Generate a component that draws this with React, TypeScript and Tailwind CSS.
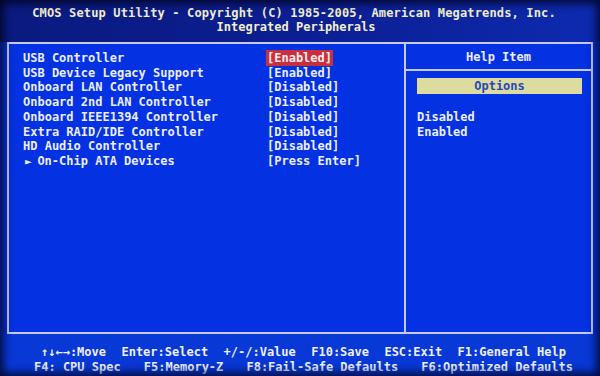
const ITEMS: { label: string; value: string; sub?: boolean; active?: boolean }[] = [
  { label: "USB Controller", value: "[Enabled]", active: true },
  { label: "USB Device Legacy Support", value: "[Enabled]" },
  { label: "Onboard LAN Controller", value: "[Disabled]" },
  { label: "Onboard 2nd LAN Controller", value: "[Disabled]" },
  { label: "Onboard IEEE1394 Controller", value: "[Disabled]" },
  { label: "Extra RAID/IDE Controller", value: "[Disabled]" },
  { label: "HD Audio Controller", value: "[Disabled]" },
  { label: "On-Chip ATA Devices", value: "[Press Enter]", sub: true },
];

const KEYS_TOP = [
  "↑↓←→:Move",
  "Enter:Select",
  "+/-/:Value",
  "F10:Save",
  "ESC:Exit",
  "F1:General Help",
];

const KEYS_BOTTOM = [
  "F4: CPU Spec",
  "F5:Memory-Z",
  "F8:Fail-Safe Defaults",
  "F6:Optimized Defaults",
];

export default function App() {
  return (
    <div className="relative h-[376px] w-[600px] overflow-hidden bg-[#0532d8] font-['DejaVu_Sans_Mono',monospace] text-[12px] font-bold">
      {/* Title strip */}
      <div className="flex h-[42px] flex-col items-center bg-gradient-to-r from-[#0a1a80] via-[#0c1e92] to-[#0d2ab0] pt-[6px] leading-[14px] text-[#f2f0cc]">
        <div className="tracking-[0.15px] pr-[12px]">
          CMOS Setup Utility - Copyright (C) 1985-2005, American Megatrends, Inc.
        </div>
        <div className="pr-[8px]">Integrated Peripherals</div>
      </div>

      {/* Main frame */}
      <div className="mx-[7px] flex h-[292px] border-2 border-[#c6cbee] bg-[#0431e2]">
        <div className="w-[397px] border-r-2 border-[#c6cbee] pl-[14px] pt-[7px] leading-[14.7px] text-[#eceefa]">
          {ITEMS.map((it) => (
            <div key={it.label} className="flex">
              <div className="w-[244px] whitespace-pre">
                {it.sub ? (
                  <>
                    <span className="inline-block w-[14.4px] pl-[2px] text-[11px]">►</span>
                    {it.label}
                  </>
                ) : (
                  it.label
                )}
              </div>
              <div className="whitespace-pre">
                {it.active ? (
                  <span className="-ml-[1px] bg-[#c8303e] px-[1px] py-[1px] text-[#fbeef0]">{it.value}</span>
                ) : (
                  it.value
                )}
              </div>
            </div>
          ))}
        </div>

        <div className="flex flex-1 flex-col text-[#eceefa]">
          <div className="flex h-[27px] items-center justify-center border-b-2 border-[#c6cbee] pt-[1px]">
            Help Item
          </div>
          <div className="mt-[7px] ml-[11px] mr-[9px] flex h-[16px] items-center justify-center bg-[#dcdca0] text-[#2a46b8]">
            Options
          </div>
          <div className="ml-[11px] mt-[16px] leading-[14.5px]">
            <div>Disabled</div>
            <div>Enabled</div>
          </div>
        </div>
      </div>

      {/* Key legend */}
      <div className="bg-[#0838d6] pt-[11px] leading-[15px] text-[#eef0ff]">
        <div className="flex justify-between pl-[41px] pr-[34px]">
          {KEYS_TOP.map((k) => (
            <span key={k} className="whitespace-pre">{k}</span>
          ))}
        </div>
        <div className="flex justify-between pl-[34px] pr-[27px]">
          {KEYS_BOTTOM.map((k) => (
            <span key={k} className="whitespace-pre">{k}</span>
          ))}
        </div>
        <div className="h-[20px]" />
      </div>

      {/* photo vignette over the edges */}
      <div className="pointer-events-none absolute inset-0 shadow-[inset_0_0_10px_3px_rgba(0,0,20,0.85)]" />
    </div>
  );
}
